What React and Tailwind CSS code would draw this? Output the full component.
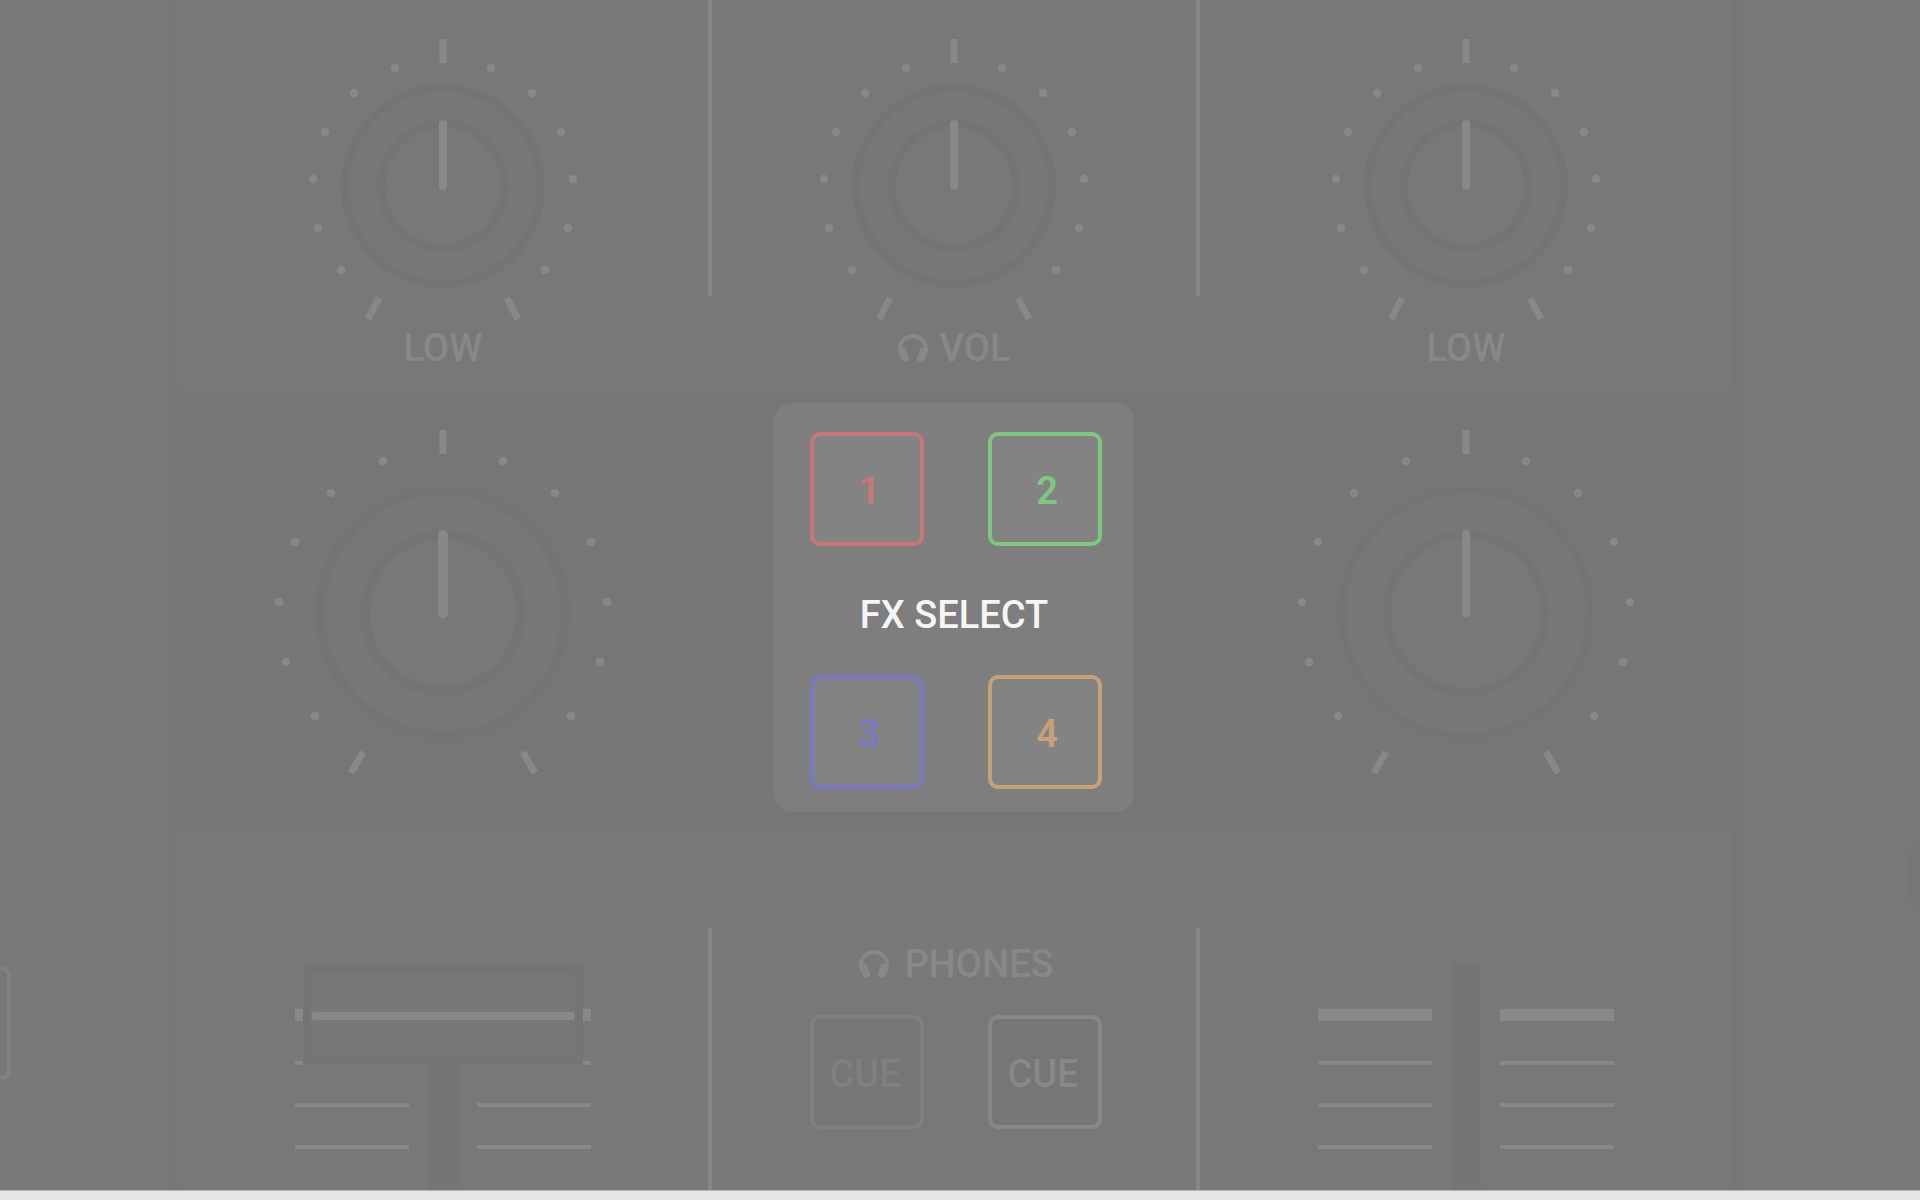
import React, { useState } from 'react';

const EQ_DOTS = [[48, 68], [89, 93], [118, 132], [130, 179], [125, 228], [102, 270]];
const FX_DOTS = [[60, 61], [112, 93], [148, 142], [164, 202], [157, 262], [128, 316]];

const FX_BUTTONS = {
  1: 'border-[#c47879] text-[#c47879]',
  2: 'border-[#7fc681] text-[#7fc681]',
  3: 'border-[#7a79c2] text-[#7a79c2]',
  4: 'border-[#c6a078] text-[#c6a078]',
};

const Headphones = () => (
  <svg viewBox="0 0 30 28" className="w-[30px] h-7 shrink-0" aria-hidden="true">
    <path
      d="M5.200 27.300C2 23.500 0 20 0 15C0 6.700 6.700 0 15 0S30 6.700 30 15C30 20 28 23.500 24.800 27.300Q24 28.200 22.800 27.800L19.500 26.800Q18.300 26.300 18.700 25L21.800 15.500Q22.500 13.300 24.500 13.800L26 14.500C26 8.500 21 4 15 4S4 8.500 4 14.500L5.500 13.800Q7.500 13.300 8.200 15.500L11.300 25Q11.700 26.300 10.500 26.800L7.200 27.800Q6 28.200 5.200 27.300Z"
      fill="currentColor"
    />
  </svg>
);

const Dial = ({ label, size, dots, ticks, cy, outer, inner, stroke }) => {
  const [value, setValue] = useState(50);
  const angle = (value - 50) * 3;

  return (
    <div className="relative">
      <svg viewBox={`-180 0 360 ${size}`} width="360" height={size} className="block" aria-hidden="true">
        <circle cy={cy} r={outer - stroke / 2} fill="#777777" stroke="#747474" strokeWidth={stroke} />
        <circle cy={cy} r={inner - stroke / 2} fill="#787878" stroke="#747474" strokeWidth={stroke} />
        <path d={ticks} stroke="#888888" strokeWidth="7" />
        <g fill="#888888">
          {dots.map(([x, y]) => (
            <React.Fragment key={y}>
              <circle cx={-x} cy={y - 30} r="4.300" />
              <circle cx={x} cy={y - 30} r="4.300" />
            </React.Fragment>
          ))}
        </g>
        <path
          d={`M0 ${cy}V${cy - inner + stroke / 2}`}
          transform={`rotate(${angle} 0 ${cy})`}
          stroke="#888888"
          strokeWidth={stroke}
          strokeLinecap="round"
        />
      </svg>
      <input
        type="range"
        aria-label={label}
        value={value}
        onChange={(e) => setValue(Number(e.target.value))}
        className="absolute inset-0 w-full h-full opacity-0 cursor-pointer"
      />
    </div>
  );
};

const EqDial = ({ label }) => (
  <Dial
    label={label}
    size={295}
    dots={EQ_DOTS}
    ticks="M0 9V33M-64 268L-75 289M64 268L75 289"
    cy={156}
    outer={102}
    inner={66}
    stroke={8}
  />
);

const FxDial = ({ label, stroke }) => (
  <Dial
    label={label}
    size={350}
    dots={FX_DOTS}
    ticks="M0 0V24M-80 322L-92 343M80 322L92 343"
    cy={183}
    outer={128}
    inner={83}
    stroke={stroke}
  />
);

const Scale = () => (
  <div className="w-[114px] pt-[46px]">
    <div className="h-3 bg-[#888888] mb-10"></div>
    <div className="flex flex-col gap-[38px]">
      {[1, 2, 3].map((n) => (
        <div key={n} className="h-1 bg-[#888888]"></div>
      ))}
    </div>
  </div>
);

const Fader = ({ label, cap }) => (
  <div className="relative h-[227px] w-[296px] flex justify-between">
    <Scale />
    <div className="w-[30px] bg-[#757575]"></div>
    <Scale />
    {cap && (
      <div className="absolute top-[3px] left-2 w-[280px] h-[99px] border-8 border-[#747474] bg-[#777777] flex items-center">
        <div className="h-2 w-full rounded-full bg-[#888888]"></div>
      </div>
    )}
    <input type="range" aria-label={label} className="absolute inset-0 w-full h-full opacity-0 cursor-pointer" />
  </div>
);

const PadButton = ({ className, children, ...props }) => (
  <button
    type="button"
    className={`w-[114px] h-[114px] rounded-[10px] border-4 pt-1 flex items-center justify-center ${className}`}
    {...props}
  >
    {children}
  </button>
);

const FxRow = ({ numbers }) => (
  <div className="flex gap-16 pl-1">
    {numbers.map((n) => (
      <PadButton key={n} className={`bg-[#838383] pl-1 font-semibold ${FX_BUTTONS[n]}`}>{n}</PadButton>
    ))}
  </div>
);

const App = () => {
  const columns = 'grid grid-cols-[530fr_4px_484fr_4px_532fr]';

  return (
    <div className="min-h-screen flex flex-col bg-[#e6e6e6] font-['Roboto',sans-serif] font-medium text-[38px] leading-[46px] text-[#888888]">
      <main className="flex-1 grid grid-cols-[170fr_1572fr_178fr] bg-[#787878]">
        {/* Left deck */}
        <aside className="overflow-hidden pt-[932px] flex">
          <div className="w-9 bg-[#797979] pt-[34px] overflow-hidden">
            <PadButton aria-label="Deck pad" className="-ml-[103px] border-[#818181] bg-[#777777]" />
          </div>
        </aside>

        {/* Mixer */}
        <div className="border-l-8 border-r-10 border-[#767676] flex flex-col">
          <section className={`${columns} h-[390px]`}>
            <div className="pt-[30px] flex flex-col items-center">
              <EqDial label="Low left" />
              <span>LOW</span>
            </div>
            <div className="bg-[#878787] h-[296px]"></div>
            <div className="pt-[30px] flex flex-col items-center">
              <EqDial label="Headphone volume" />
              <span className="flex items-center gap-3">
                <Headphones />
                VOL
              </span>
            </div>
            <div className="bg-[#878787] h-[296px]"></div>
            <div className="pt-[30px] flex flex-col items-center">
              <EqDial label="Low right" />
              <span>LOW</span>
            </div>
          </section>

          <section className={`${columns} h-[440px] bg-[#767676]`}>
            <div className="pt-10 flex justify-center">
              <FxDial label="Effect left" stroke={10} />
            </div>
            <div className="col-span-3 pt-[13px] flex justify-center">
              <div className="w-[360px] h-[409px] rounded-[18px] bg-[#7e7e7e] pt-[29px] pb-[23px] flex flex-col items-center justify-between">
                <FxRow numbers={[1, 2]} />
                <h2 className="pt-2 text-[#f5f5f5]">FX SELECT</h2>
                <FxRow numbers={[3, 4]} />
              </div>
            </div>
            <div className="pt-10 flex justify-center">
              <FxDial label="Effect right" stroke={8} />
            </div>
          </section>

          <section className={`${columns} flex-1`}>
            <div className="pt-[133px] flex justify-center">
              <Fader label="Channel 1 volume" cap />
            </div>
            <div className="mt-[98px] bg-[#878787]"></div>
            <div className="pt-[98px] pl-1 flex flex-col items-center">
              <div className="w-[290px] h-[70px] pt-[2px] bg-[#797979] flex items-center justify-center gap-4">
                <Headphones />
                PHONES
              </div>
              <div className="flex gap-16 pt-[17px]">
                <PadButton aria-label="Cue channel 1" className="pr-1 border-[#808080] text-[#808080] bg-[#767676]">CUE</PadButton>
                <PadButton aria-label="Cue channel 2" className="pr-1 border-[#888888] bg-[#767676]">CUE</PadButton>
              </div>
            </div>
            <div className="mt-[98px] bg-[#878787]"></div>
            <div className="pt-[133px] flex justify-center">
              <Fader label="Channel 2 volume" />
            </div>
          </section>
        </div>

        {/* Right deck */}
        <aside className="overflow-hidden pt-[790px] flex">
          <div className="ml-auto w-3 overflow-hidden">
            <div className="w-[172px] h-[172px] rounded-full bg-[#767676]"></div>
          </div>
        </aside>
      </main>
      <footer className="h-[10px] border-t border-[#b5b5b5]"></footer>
    </div>
  );
};

export default App;
